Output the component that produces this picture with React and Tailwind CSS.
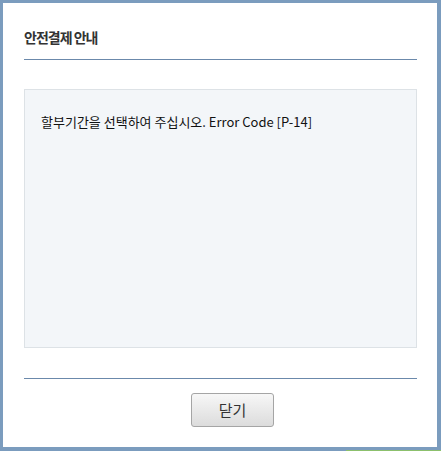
export default function App() {
  return (
    <div className="w-[441px] h-[451px] bg-[#7b9cbe] flex flex-col" style={{ fontFamily: '"Noto Sans CJK KR", "Noto Sans", sans-serif' }}>
      <div className="flex-1 mt-[3px] ml-[3px] mr-[4px] mb-[3px] bg-white flex flex-col px-[21px] pr-[20px]">
        <div className="h-[57px] border-b border-[#6b89ab] pt-[24px]">
          <h1 className="text-[14px] leading-[20px] font-bold text-[#333] tracking-[-1px]">안전결제 안내</h1>
        </div>
        <div className="mt-[29px] h-[259px] border border-[#dde2e6] bg-[#f3f6f9] pl-[16px] pt-[23px]">
          <p className="text-[13px] leading-[18px] text-[#111]">할부기간을 선택하여 주십시오. Error Code [P-14]</p>
        </div>
        <div className="mt-[30px] h-px bg-[#6b89ab]" />
        <div className="mt-[14px] flex">
          <button className="ml-[167px] w-[83px] h-[34px] rounded-[3px] border border-[#a5a5a5] bg-gradient-to-b from-[#f7f7f7] to-[#dcdcdc] text-[15px] text-[#333] flex items-center justify-center">닫기</button>
        </div>
      </div>
      <div className="h-px ml-[346px] bg-[#8cc06c]" />
    </div>
  );
}
